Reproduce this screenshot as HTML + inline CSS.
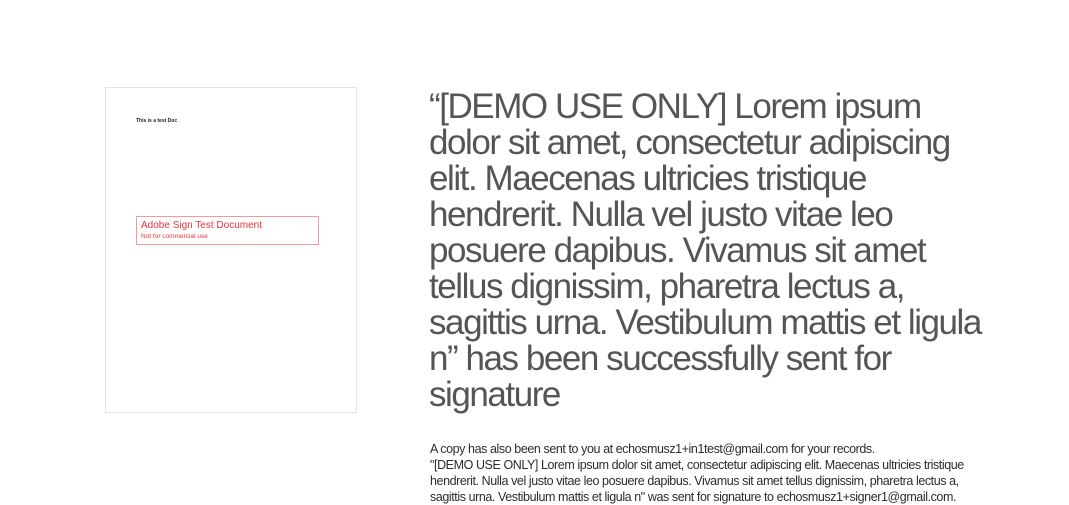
<!DOCTYPE html>
<html><head><meta charset="utf-8"><style>
html,body{margin:0;padding:0;background:#fff;width:1069px;height:494px;overflow:hidden;font-family:"Liberation Sans",sans-serif;}
.doc{position:absolute;left:105px;top:87px;width:250px;height:324px;border:1px solid #e3e3e3;background:#fff;}
.t1{position:absolute;left:30px;top:30px;font-size:5px;font-weight:bold;color:#222;}
.box{position:absolute;left:30px;top:128px;width:181px;height:27px;border:1px solid #f29b9b;}
.box .a{position:absolute;left:4px;top:3px;font-size:10px;color:#e8333a;white-space:nowrap;}
.box .b{position:absolute;left:4px;top:16px;font-size:6.5px;color:#e8333a;white-space:nowrap;}
.h{position:absolute;left:429px;top:89px;font-size:35px;line-height:36px;color:#555;letter-spacing:-1.45px;white-space:nowrap;}
.p{position:absolute;left:430px;top:441px;font-size:12.5px;line-height:16px;color:#2c2c2c;letter-spacing:-0.42px;white-space:nowrap;}
</style></head><body>
<div class="doc">
<div class="t1">This is a test Doc</div>
<div class="box"><div class="a">Adobe Sign Test Document</div><div class="b">Not for commercial use</div></div>
</div>
<div class="h">“[DEMO USE ONLY] Lorem ipsum<br>dolor sit amet, consectetur adipiscing<br>elit. Maecenas ultricies tristique<br>hendrerit. Nulla vel justo vitae leo<br>posuere dapibus. Vivamus sit amet<br>tellus dignissim, pharetra lectus a,<br>sagittis urna. Vestibulum mattis et ligula<br>n” has been successfully sent for<br>signature</div>
<div class="p">A copy has also been sent to you at echosmusz1+in1test@gmail.com for your records.<br>"[DEMO USE ONLY] Lorem ipsum dolor sit amet, consectetur adipiscing elit. Maecenas ultricies tristique<br>hendrerit. Nulla vel justo vitae leo posuere dapibus. Vivamus sit amet tellus dignissim, pharetra lectus a,<br>sagittis urna. Vestibulum mattis et ligula n" was sent for signature to echosmusz1+signer1@gmail.com.</div>
</body></html>
